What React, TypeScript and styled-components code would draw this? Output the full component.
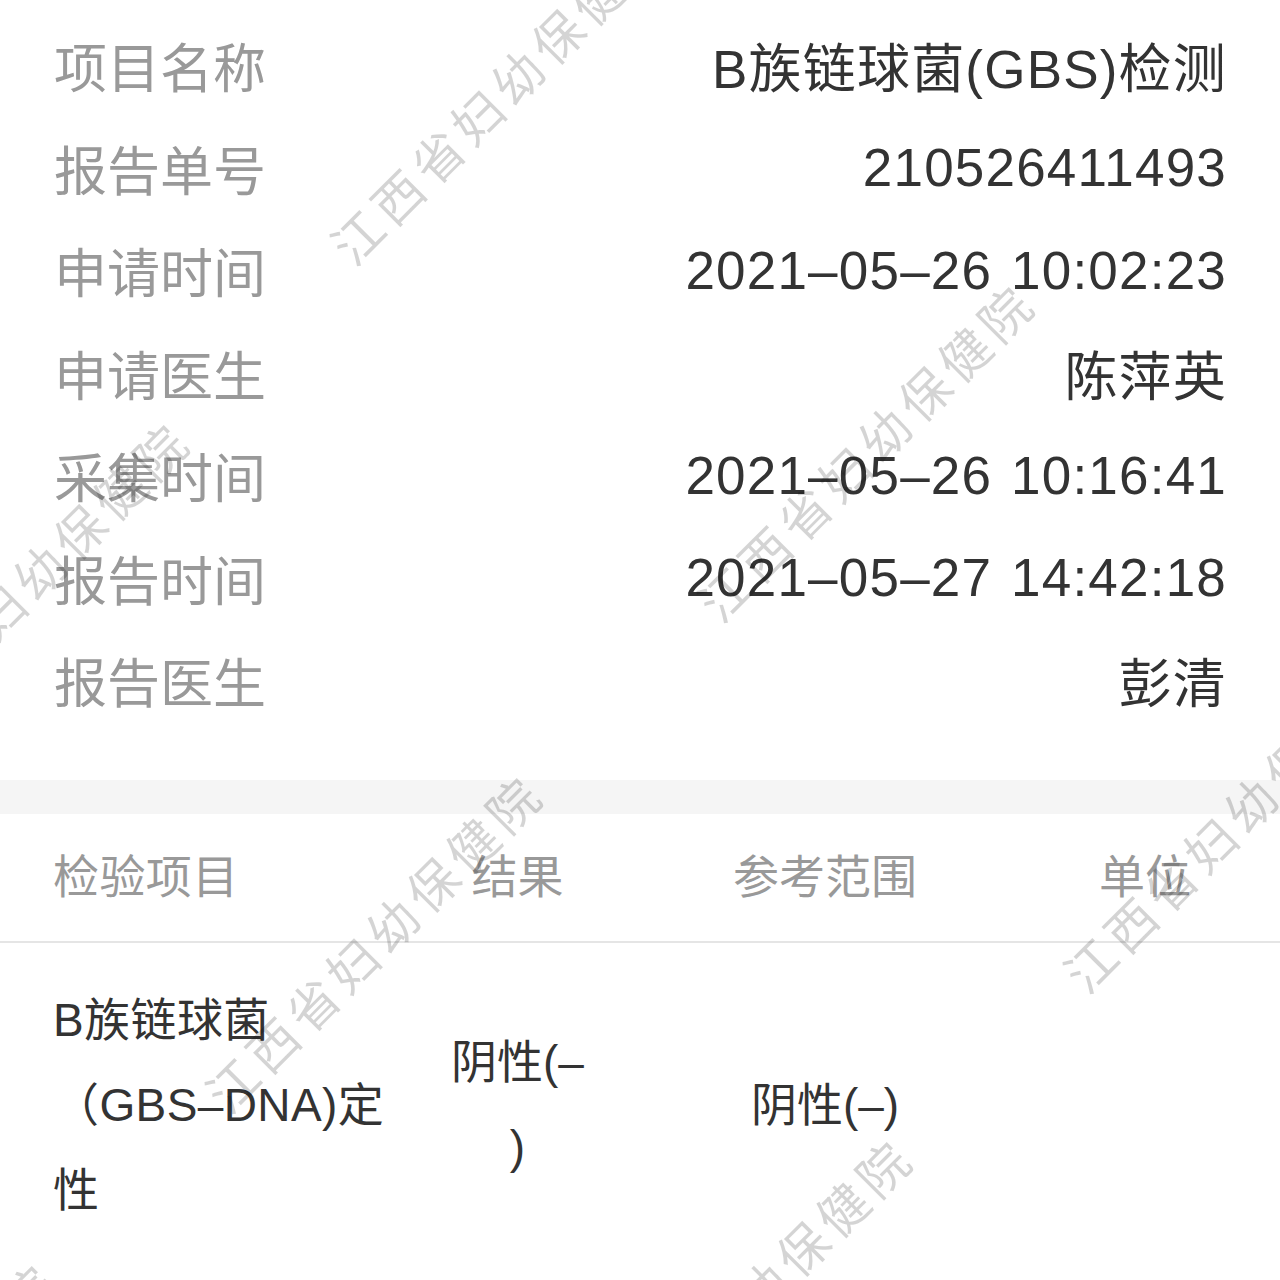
import React from "react";
import styled, { createGlobalStyle } from "styled-components";

const GlobalStyle = createGlobalStyle`
  html, body {
    margin: 0;
    padding: 0;
    background: #ffffff;
  }
  body {
    font-family: "Liberation Sans", "Noto Sans CJK SC", sans-serif;
    -webkit-font-smoothing: antialiased;
  }
`;

const Page = styled.div`
  position: relative;
  width: 1280px;
  height: 1280px;
  overflow: hidden;
  background: #ffffff;
  font-family: "Liberation Sans", "Noto Sans CJK SC", sans-serif;
`;

const InfoList = styled.div`
  display: flex;
  flex-direction: column;
  padding: 14px 54px 48px 54px;
`;

const InfoRow = styled.div`
  display: flex;
  align-items: center;
  justify-content: space-between;
  height: 102.5px;
  font-size: 53px;
`;

const InfoLabel = styled.span`
  color: #999999;
  white-space: nowrap;
`;

const InfoValue = styled.span`
  color: #333333;
  white-space: nowrap;
  text-align: right;
  letter-spacing: 1.2px;
  word-spacing: 3px;
  margin-right: -1px;
`;

const Divider = styled.div`
  height: 34px;
  background: #f5f5f5;
`;

const TableRow = styled.div<{ $head?: boolean }>`
  display: grid;
  grid-template-columns: 395px 245px 370px 1fr;
  align-items: center;
  font-size: 46px;
  color: ${(p) => (p.$head ? "#999999" : "#333333")};
  line-height: 85px;
  ${(p) =>
    p.$head
      ? `height: 127px; border-bottom: 2px solid #e5e5e5; line-height: 1;`
      : `padding: 35px 0;`}
`;

const Cell = styled.div<{ $first?: boolean; $pad?: number; $loose?: boolean }>`
  text-align: ${(p) => (p.$first ? "left" : "center")};
  padding-left: ${(p) => (p.$first ? "53px" : `${p.$pad ?? 0}px`)};
  padding-right: ${(p) => (p.$first ? "0" : `${p.$pad ?? 0}px`)};
  line-break: ${(p) => (p.$loose ? "anywhere" : "auto")};
  letter-spacing: ${(p) => (p.$first ? "0.4px" : "0")};
`;

const WatermarkLayer = styled.div`
  position: absolute;
  inset: 0;
  pointer-events: none;
`;

const Watermark = styled.div`
  position: absolute;
  white-space: nowrap;
  font-family: "Noto Sans CJK SC", sans-serif;
  font-size: 50px;
  letter-spacing: 6.5px;
  color: rgba(0, 0, 0, 0.17);
  transform: translate(-50%, -50%) rotate(-45deg);
  line-height: 1;
`;

const infoRows: [string, string][] = [
  ["项目名称", "B族链球菌(GBS)检测"],
  ["报告单号", "210526411493"],
  ["申请时间", "2021–05–26 10:02:23"],
  ["申请医生", "陈萍英"],
  ["采集时间", "2021–05–26 10:16:41"],
  ["报告时间", "2021–05–27 14:42:18"],
  ["报告医生", "彭清"],
];

const marks: [number, number][] = [
  [498, 93],
  [865, 450],
  [20, 588],
  [373, 941],
  [1231, 821],
  [743, 1305],
  [-112, 1429],
];

export default function App() {
  return (
    <>
      <GlobalStyle />
      <Page>
        <InfoList>
          {infoRows.map(([k, v]) => (
            <InfoRow key={k}>
              <InfoLabel>{k}</InfoLabel>
              <InfoValue>{v}</InfoValue>
            </InfoRow>
          ))}
        </InfoList>
        <Divider />
        <TableRow $head>
          <Cell $first>检验项目</Cell>
          <Cell>结果</Cell>
          <Cell>参考范围</Cell>
          <Cell>单位</Cell>
        </TableRow>
        <TableRow>
          <Cell $first>B族链球菌（GBS–DNA)定性</Cell>
          <Cell $pad={52} $loose>
            阴性(–)
          </Cell>
          <Cell>阴性(–)</Cell>
          <Cell></Cell>
        </TableRow>
        <WatermarkLayer>
          {marks.map(([x, y], i) => (
            <Watermark key={i} style={{ left: x, top: y }}>
              江西省妇幼保健院
            </Watermark>
          ))}
        </WatermarkLayer>
      </Page>
    </>
  );
}
